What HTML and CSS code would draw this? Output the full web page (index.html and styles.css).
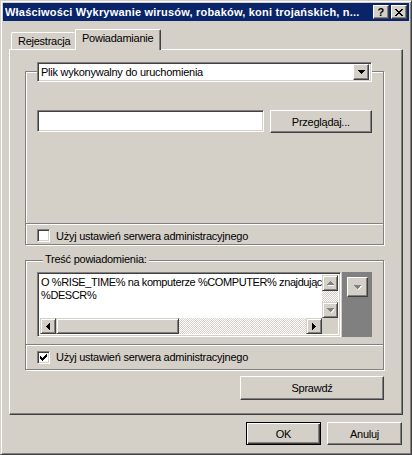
FILE: index.html
```html
<!DOCTYPE html>
<html lang="pl">
<head>
  <meta charset="utf-8">
  <title>Właściwości</title>
  <link rel="stylesheet" href="styles.css">
</head>
<body>
  <div class="window">
    <div class="titlebar">
      <span class="title">Właściwości Wykrywanie wirusów, robaków, koni trojańskich, n...</span>
      <div class="caption-buttons">
        <span class="cap-btn help">?</span>
        <span class="cap-btn close">
          <svg width="8" height="7" viewBox="0 0 8 7" shape-rendering="crispEdges">
            <path d="M0 0h2v1h-2zM6 0h2v1h-2zM1 1h2v1h-2zM5 1h2v1h-2zM2 2h4v1h-4zM3 3h2v1h-2zM2 4h4v1h-4zM1 5h2v1h-2zM5 5h2v1h-2zM0 6h2v1h-2zM6 6h2v1h-2z" fill="#000"/>
          </svg>
        </span>
      </div>
    </div>

    <div class="client">
      <div class="tabs">
        <div class="tab">Rejestracja</div>
        <div class="tab active">Powiadamianie</div>
      </div>

      <div class="panel">
        <div class="group group-type">
          <div class="group-body">
            <div class="combo">
              <span class="combo-text">Plik wykonywalny do uruchomienia</span>
              <span class="combo-btn">
                <svg width="7" height="4" viewBox="0 0 7 4" shape-rendering="crispEdges"><path d="M0 0h7v1h-7zM1 1h5v1h-5zM2 2h3v1h-3zM3 3h1v1h-1z" fill="#000"/></svg>
              </span>
            </div>
            <div class="file-row">
              <div class="edit"></div>
              <div class="btn browse">Przeglądaj...</div>
            </div>
          </div>
          <div class="group-foot">
            <label class="check"><span class="box"></span>Użyj ustawień serwera administracyjnego</label>
          </div>
        </div>

        <div class="group group-text">
          <div class="group-body">
            <span class="legend">Treść powiadomienia:</span>
            <div class="text-row">
              <div class="memo">
                <div class="memo-text">O %RISE_TIME% na komputerze %COMPUTER% znajdując<br>%DESCR%</div>
                <div class="vscroll">
                  <span class="sb-btn">
                    <svg width="7" height="5" viewBox="0 0 7 5" shape-rendering="crispEdges"><path d="M4 1h1v1h1v1h1v1h-4zM1 4h6v1h-6z" fill="#fff"/><path d="M3 0h1v1h1v1h1v1h1v1h-7v-1h1v-1h1v-1h1z" fill="#808080"/></svg>
                  </span>
                  <span class="sb-track"></span>
                  <span class="sb-btn">
                    <svg width="7" height="5" viewBox="0 0 7 5" shape-rendering="crispEdges"><path d="M1 1h7v1h-1v1h-1v1h-1v1h-1v-1h1v-1h1v-1h1z" fill="#fff"/><path d="M0 0h7v1h-1v1h-1v1h-1v1h-1v-1h-1v-1h-1v-1h-1z" fill="#808080"/></svg>
                  </span>
                </div>
                <div class="hscroll">
                  <span class="sb-btn">
                    <svg width="4" height="7" viewBox="0 0 4 7" shape-rendering="crispEdges"><path d="M3 0h1v7h-1zM2 1h1v5h-1zM1 2h1v3h-1zM0 3h1v1h-1z" fill="#000"/></svg>
                  </span>
                  <span class="sb-thumb"></span>
                  <span class="sb-track"></span>
                  <span class="sb-btn">
                    <svg width="4" height="7" viewBox="0 0 4 7" shape-rendering="crispEdges"><path d="M0 0h1v7h-1zM1 1h1v5h-1zM2 2h1v3h-1zM3 3h1v1h-1z" fill="#000"/></svg>
                  </span>
                </div>
                <div class="sb-corner"></div>
              </div>
              <div class="insert-box">
                <span class="btn insert-btn">
                  <svg width="8" height="5" viewBox="0 0 8 5" shape-rendering="crispEdges"><path d="M1 1h7v1h-1v1h-1v1h-1v1h-1v-1h1v-1h1v-1h1z" fill="#fff"/><path d="M0 0h7v1h-1v1h-1v1h-1v1h-1v-1h-1v-1h-1v-1h-1z" fill="#808080"/></svg>
                </span>
              </div>
            </div>
          </div>
          <div class="group-foot">
            <label class="check"><span class="box checked">
              <svg width="7" height="7" viewBox="0 0 7 7" shape-rendering="crispEdges"><path d="M6 0h1v3h-1v1h-1v1h-1v1h-1v1h-1v-1h-1v-1h-1v-3h1v1h1v1h1v-1h1v-1h1z" fill="#000"/></svg>
            </span>Użyj ustawień serwera administracyjnego</label>
          </div>
        </div>

        <div class="test-row">
          <div class="btn test">Sprawdź</div>
        </div>
      </div>

      <div class="dialog-buttons">
        <div class="btn default">OK</div>
        <div class="btn">Anuluj</div>
      </div>
    </div>
  </div>
</body>
</html>
```

FILE: styles.css
```css
html, body {
  margin: 0;
  padding: 0;
}

body {
  background: #d4d0c8;
  color: #000;
  font-family: "Liberation Sans", Arial, sans-serif;
  font-size: 11px;
  letter-spacing: -0.25px;
}

.window {
  box-sizing: border-box;
  width: 412px;
  height: 455px;
  padding: 2px;
  background: #d4d0c8;
  border: 1px solid;
  border-color: #d4d0c8 #404040 #404040 #d4d0c8;
  box-shadow: inset 1px 1px #fff, inset -1px -1px #808080;
}

/* title bar */
.titlebar {
  display: flex;
  align-items: center;
  height: 18px;
  padding: 0 2px;
  background: #0a246a;
  color: #fff;
  font-weight: bold;
  letter-spacing: 0.2px;
}

.title {
  flex: 1;
  white-space: nowrap;
  overflow: hidden;
}

.caption-buttons {
  display: flex;
  gap: 2px;
}

.cap-btn {
  box-sizing: border-box;
  display: flex;
  align-items: center;
  justify-content: center;
  width: 16px;
  height: 14px;
  background: #d4d0c8;
  border: 1px solid;
  border-color: #fff #404040 #404040 #fff;
  box-shadow: inset -1px -1px #808080;
  color: #000;
  font-size: 11px;
  line-height: 12px;
}

/* shared 3d bits */
.btn {
  box-sizing: border-box;
  display: flex;
  align-items: center;
  justify-content: center;
  background: #d4d0c8;
  border: 1px solid;
  border-color: #fff #404040 #404040 #fff;
  box-shadow: inset -1px -1px #808080;
}

.btn.default {
  border-color: #000;
  box-shadow: inset 1px 1px #fff, inset -1px -1px #404040, inset -2px -2px #808080;
}

.client {
  padding: 8px 6px 0;
}

/* tabs */
.tabs {
  display: flex;
  align-items: flex-end;
  height: 20px;
  padding-left: 2px;
}

.tab {
  box-sizing: border-box;
  height: 17px;
  padding: 2px 0 0 6px;
  border-top: 1px solid #fff;
  border-left: 1px solid #fff;
  border-radius: 2px 2px 0 0;
  width: 64px;
}

.tab.active {
  position: relative;
  z-index: 1;
  width: 86px;
  height: 21px;
  margin-bottom: -1px;
  padding-top: 2px;
  background: #d4d0c8;
  border-right: 1px solid #404040;
  box-shadow: inset -1px 0 #808080;
}

.panel {
  box-sizing: border-box;
  height: 366px;
  padding: 21px 18px 0 15px;
  border: 1px solid;
  border-color: #fff #404040 #404040 #fff;
  box-shadow: inset -1px -1px #808080;
}

/* group boxes */
.group {
  display: flex;
  flex-direction: column;
  box-sizing: border-box;
  border: 1px solid #808080;
  box-shadow: inset 1px 1px #fff, 1px 1px #fff;
}

.group-type {
  height: 174px;
}

.group-text {
  height: 110px;
  margin-top: 15px;
}

.group-body {
  display: flex;
  flex-direction: column;
  padding: 0 11px;
}

.group-type .group-body {
  height: 151px;
}

.group-text .group-body {
  height: 83px;
}

.group-foot {
  flex: 1;
  display: flex;
  align-items: center;
  padding-left: 11px;
  border-top: 1px solid #808080;
  box-shadow: inset 0 1px #fff;
}

.group-type .group-foot {
  padding-top: 3px;
}

.check {
  display: flex;
  align-items: center;
  gap: 6px;
}

.box {
  box-sizing: border-box;
  display: flex;
  align-items: center;
  justify-content: center;
  width: 13px;
  height: 13px;
  background: #fff;
  border: 1px solid;
  border-color: #808080 #fff #fff #808080;
  box-shadow: inset 1px 1px #404040, inset -1px -1px #d4d0c8;
}

/* combo + edit */
.combo,
.edit,
.memo {
  box-sizing: border-box;
  background: #fff;
  border: 1px solid;
  border-color: #808080 #fff #fff #808080;
  box-shadow: inset 1px 1px #404040, inset -1px -1px #d4d0c8;
}

.combo {
  display: flex;
  align-items: center;
  height: 20px;
  margin-top: -10px;
  padding: 2px;
}

.combo-text {
  flex: 1;
  padding-left: 1px;
  white-space: nowrap;
}

.combo-btn {
  box-sizing: border-box;
  display: flex;
  align-items: center;
  justify-content: center;
  width: 16px;
  height: 16px;
  background: #d4d0c8;
  border: 1px solid;
  border-color: #fff #404040 #404040 #fff;
  box-shadow: inset -1px -1px #808080;
}

.file-row {
  display: flex;
  align-items: flex-start;
  gap: 6px;
  margin-top: 28px;
}

.edit {
  width: 228px;
  height: 22px;
}

.browse {
  width: 103px;
  height: 23px;
}

/* memo with its scrollbars */
.legend {
  align-self: flex-start;
  height: 13px;
  line-height: 13px;
  margin: -8px 0 0 6px;
  padding: 0 2px;
  background: #d4d0c8;
}

.text-row {
  display: flex;
  gap: 1px;
  margin-top: 6px;
}

.memo {
  display: grid;
  grid-template-columns: 1fr 16px;
  grid-template-rows: 1fr 16px;
  width: 305px;
  height: 65px;
  padding: 2px;
}

.memo-text {
  padding: 1px 0 0 1px;
  line-height: 13px;
  letter-spacing: -0.4px;
  white-space: nowrap;
  overflow: hidden;
}

.vscroll {
  display: flex;
  flex-direction: column;
}

.hscroll {
  display: flex;
}

.sb-btn {
  box-sizing: border-box;
  display: flex;
  align-items: center;
  justify-content: center;
  width: 16px;
  height: 16px;
  background: #d4d0c8;
  border: 1px solid;
  border-color: #d4d0c8 #404040 #404040 #d4d0c8;
  box-shadow: inset 1px 1px #fff, inset -1px -1px #808080;
}

.sb-track {
  flex: 1;
  background: repeating-conic-gradient(#fff 0 25%, #d4d0c8 0 50%) 0 0 / 2px 2px;
}

.sb-thumb {
  box-sizing: border-box;
  width: 123px;
  background: #d4d0c8;
  border: 1px solid;
  border-color: #d4d0c8 #404040 #404040 #d4d0c8;
  box-shadow: inset 1px 1px #fff, inset -1px -1px #808080;
}

.sb-corner {
  background: #d4d0c8;
}

.insert-box {
  box-sizing: border-box;
  width: 30px;
  height: 65px;
  padding: 5px;
  background: #808080;
}

.insert-btn {
  width: 21px;
  height: 20px;
}

.test-row {
  display: flex;
  justify-content: flex-end;
  margin-top: 6px;
}

.test {
  width: 144px;
  height: 24px;
}

.dialog-buttons {
  display: flex;
  justify-content: flex-end;
  gap: 6px;
  margin-top: 7px;
  padding-right: 1px;
}

.dialog-buttons .btn {
  width: 75px;
  height: 23px;
}
```
